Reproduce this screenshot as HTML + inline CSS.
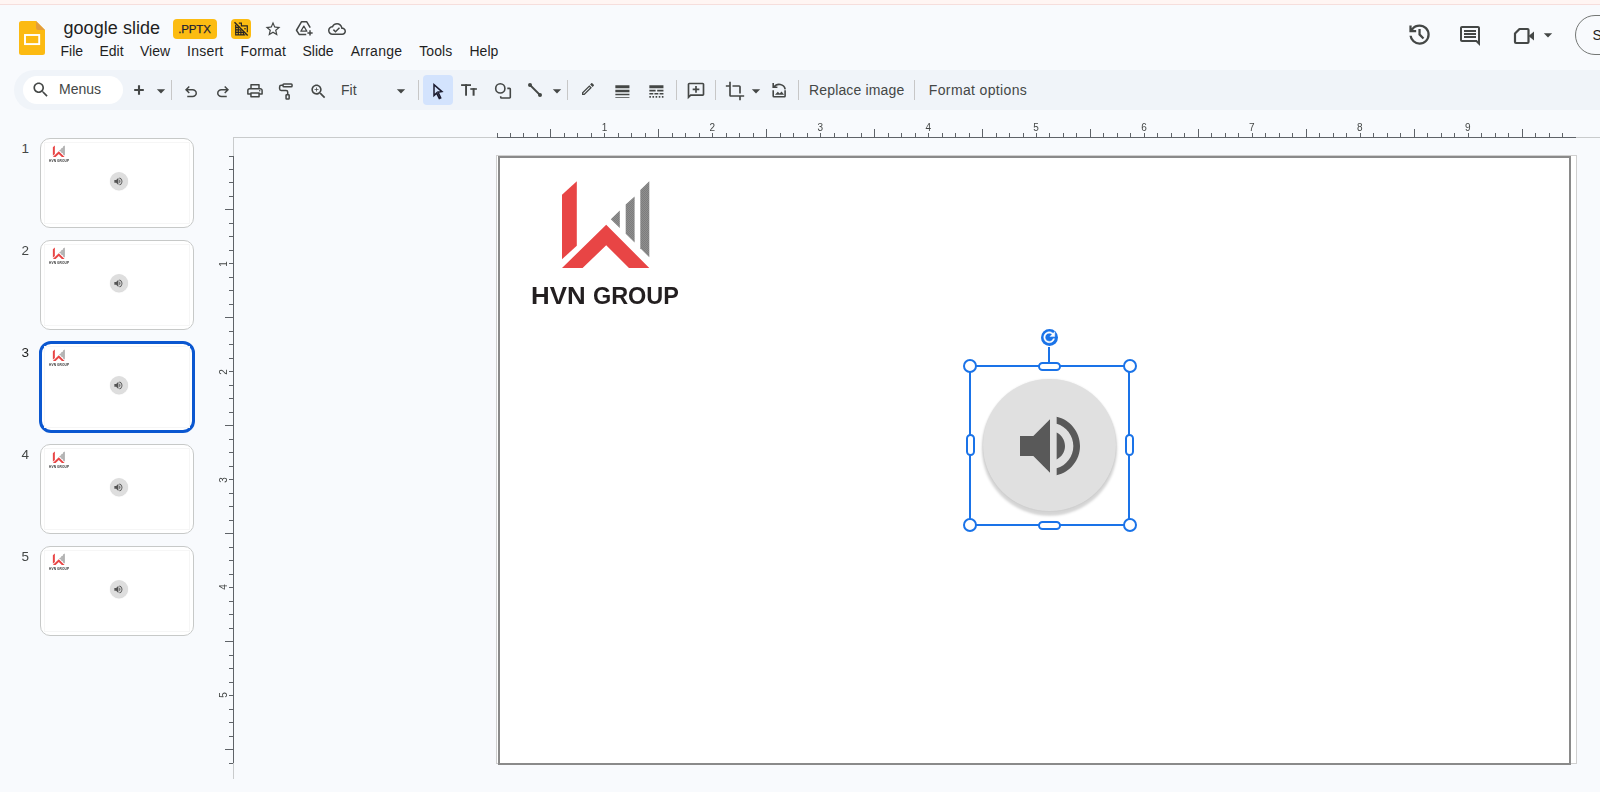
<!DOCTYPE html>
<html lang="en"><head><meta charset="utf-8"><title>google slide - Google Slides</title>
<style>
*{box-sizing:border-box;margin:0;padding:0}
html,body{width:1600px;height:792px;overflow:hidden;background:#f8fafd;font-family:"Liberation Sans",sans-serif;color:#1f1f1f}
.abs{position:absolute}
.pinkband{left:0;top:0;width:1600px;height:4px;background:#fff5f3}
.pinkline{left:0;top:4px;width:1600px;height:1px;background:#f6dedc}
.title{left:63.500px;top:17.300px;letter-spacing:.05px;font-size:18px;line-height:22px;white-space:nowrap;color:#1f1f1f}
.badge{background:#fcbc12;border-radius:4px}
.pptx{left:173px;top:19px;width:44px;height:20px;font-size:11.5px;font-weight:normal;-webkit-text-stroke:.25px #1f1f33;line-height:21.600px;text-align:center;color:#1f1f33;letter-spacing:-.12px;text-indent:-1px}
.menu{top:43px;font-size:14px;line-height:16px;white-space:nowrap;color:#1f1f1f}
.toolbar{left:14px;top:70px;width:1620px;height:40px;border-radius:20px;background:#f0f4f9}
.menus{left:23px;top:76px;width:100px;height:28px;border-radius:14px;background:#fff}
.tbtxt{top:82px;font-size:14px;line-height:16px;white-space:nowrap;color:#444746}
.sep{top:80px;width:1px;height:20px;background:#c7c7c7}
.selbtn{left:423px;top:75px;width:30px;height:30px;border-radius:4px;background:#d3e3fd}
svg{position:absolute;overflow:visible}
.rnum{font-size:10px;line-height:12px;color:#444746}
</style></head>
<body>
<div class="abs pinkband"></div><div class="abs pinkline"></div>
<svg style="left:19px;top:21px" width="26" height="34" viewBox="0 0 26 34"><path d="M2.500 0H17l9 9v22.500a2.500 2.500 0 0 1-2.500 2.500h-21A2.500 2.500 0 0 1 0 31.500v-29A2.500 2.500 0 0 1 2.500 0z" fill="#fcba12"/><path d="M17 0l9 9h-7a2 2 0 0 1-2-2z" fill="#e39d3b"/><rect x="6" y="14" width="14.200" height="9.100" fill="none" stroke="#fff" stroke-width="1.900"/></svg>
<div class="abs title">google slide</div>
<div class="abs badge pptx">.PPTX</div>
<div class="abs badge" style="left:231px;top:19px;width:20px;height:20px"></div>
<svg style="left:234px;top:22px" width="14" height="14" viewBox="0 0 14 14"><g stroke="#2a2522" stroke-width="1.200" fill="none"><path d="M4.800 1.100H7.400V3.900H13.300V10.200"/><path d="M1.700 2.800V12.900H11.300"/><path d="M1.700 5.400H4 M1.700 7.900H6.500 M1.700 10.400H9 M4.300 5V12.900 M6.900 7.500V12.900 M9.400 10V12.900"/><path d="M.5 .2L13.700 13.400" stroke-width="1.400"/></g><rect x="10.300" y="6" width="1.400" height="1.400" fill="#2a2522"/></svg>
<svg style="left:264.2px;top:19.9px" width="18" height="18" viewBox="0 0 24 24" fill="#444746" ><path d="M22 9.240l-7.190-.62L12 2 9.190 8.630 2 9.240l5.460 4.730L5.820 21 12 17.270 18.180 21l-1.630-7.030L22 9.240zM12 15.400l-3.760 2.270 1-4.280-3.320-2.880 4.380-.38L12 6.100l1.710 4.040 4.380.38-3.320 2.880 1 4.280L12 15.400z"/></svg>
<svg style="left:295px;top:18.5px" width="18" height="18" viewBox="0 0 24 24" fill="#444746" ><g fill="none" stroke="#444746" stroke-width="2" stroke-linejoin="round"><path d="M15 20.500H5.500L2 15 8.800 3.500h6.700l4.800 8"/><path d="M7.800 16.300L11.800 9.500 15.800 16.300z" stroke-width="1.700"/></g><path d="M19 15h2v2.500h2.500v2H21V22h-2v-2.500h-2.500v-2H19z"/></svg>
<svg style="left:328px;top:19.5px" width="18" height="18" viewBox="0 0 24 24" fill="#444746" ><path d="M19.350 10.040C18.670 6.590 15.640 4 12 4 9.110 4 6.600 5.640 5.350 8.040 2.340 8.360 0 10.910 0 14c0 3.310 2.690 6 6 6h13c2.760 0 5-2.240 5-5 0-2.640-2.050-4.780-4.650-4.960zM19 18H6c-2.210 0-4-1.790-4-4 0-2.050 1.530-3.760 3.560-3.970l1.070-.11.5-.95C8.080 7.140 9.940 6 12 6c2.620 0 4.880 1.860 5.390 4.430l.3 1.500 1.530.11c1.560.1 2.780 1.410 2.780 2.960 0 1.650-1.350 3-3 3zm-9-3.820l-2.090-2.090L6.500 13.500 10 17l6.010-6.010-1.410-1.410z"/></svg>
<div class="abs menu" style="left:60.5px;letter-spacing:0px">File</div>
<div class="abs menu" style="left:99.5px;letter-spacing:0px">Edit</div>
<div class="abs menu" style="left:140px;letter-spacing:0px">View</div>
<div class="abs menu" style="left:187px;letter-spacing:0.25px">Insert</div>
<div class="abs menu" style="left:240.5px;letter-spacing:0.2px">Format</div>
<div class="abs menu" style="left:302.5px;letter-spacing:0px">Slide</div>
<div class="abs menu" style="left:350.7px;letter-spacing:0.25px">Arrange</div>
<div class="abs menu" style="left:419.2px;letter-spacing:0.1px">Tools</div>
<div class="abs menu" style="left:469.5px;letter-spacing:0px">Help</div>
<svg style="left:1406.3px;top:21.3px" width="27.1" height="27.1" viewBox="0 -960 960 960" fill="#444746" ><path d="M480-120q-138 0-240.500-91.500T122-440h82q14 104 92.500 172T480-200q117 0 198.500-81.500T760-480q0-117-81.500-198.500T480-760q-69 0-129 32t-101 88h110v80H120v-240h80v94q51-64 124.500-99T480-840q75 0 140.500 28.500t114 77q48.500 48.500 77 114T840-480q0 75-28.500 140.500t-77 114q-48.500 48.500-114 77T480-120Zm112-192L440-464v-216h80v184l128 128-56 56Z"/></svg>
<svg style="left:1458px;top:23.5px" width="24" height="24" viewBox="0 0 24 24" fill="#444746" ><path d="M21.990 4c0-1.100-.89-2-1.990-2H4c-1.100 0-2 .9-2 2v12c0 1.100.9 2 2 2h14l4 4-.01-18zM20 4v13.170L18.830 16H4V4h16zM6 12h12v2H6zm0-3h12v2H6zm0-3h12v2H6z"/></svg>
<svg style="left:1512.2px;top:23.5px" width="24" height="24" viewBox="0 0 24 24" fill="#444746" ><g fill="none" stroke="#444746" stroke-width="2.200" stroke-linejoin="round"><path d="M3 9.500L7.500 5H15.500a1 1 0 0 1 1 1V18a1 1 0 0 1 -1 1H4a1 1 0 0 1 -1 -1z"/></g><path d="M16.500 12l5.500-4.500v9z"/></svg>
<svg style="left:1538.2px;top:24.7px" width="20" height="20" viewBox="0 0 24 24" fill="#444746" ><path d="M7 10l5 5 5-5z"/></svg>
<div class="abs" style="left:1575px;top:15px;width:80px;height:40px;border:1px solid #747775;border-radius:20px"></div>
<div class="abs" style="left:1592.500px;top:27px;font-size:14px;line-height:16px;color:#1f1f1f">S</div>
<div class="abs toolbar"></div>
<div class="abs menus"></div>
<svg style="left:30.8px;top:80px" width="19.5" height="19.5" viewBox="0 0 24 24" fill="#444746" ><path d="M15.5 14h-.79l-.28-.27C15.41 12.59 16 11.11 16 9.5 16 5.91 13.09 3 9.500 3S3 5.910 3 9.500 5.910 16 9.500 16c1.610 0 3.090-.59 4.230-1.570l.27.28v.79l5 4.990L20.490 19l-4.990-5zm-6 0C7.010 14 5 11.990 5 9.500S7.010 5 9.500 5 14 7.010 14 9.500 11.990 14 9.500 14z"/></svg>
<div class="abs tbtxt" style="left:59px;top:81.200px">Menus</div>
<svg style="left:130px;top:81.2px" width="18" height="18" viewBox="0 0 24 24" fill="#444746" ><path d="M10.600 5.600h2.800v5h5v2.800h-5v5h-2.800v-5h-5v-2.800h5z"/></svg>
<svg style="left:150.7px;top:80.7px" width="20" height="20" viewBox="0 0 24 24" fill="#444746" ><path d="M7 10l5 5 5-5z"/></svg>
<div class="abs sep" style="left:171px"></div>
<div class="abs sep" style="left:418px"></div>
<div class="abs sep" style="left:567px"></div>
<div class="abs sep" style="left:676px"></div>
<div class="abs sep" style="left:715px"></div>
<div class="abs sep" style="left:798px"></div>
<div class="abs sep" style="left:914px"></div>
<svg style="left:182px;top:82.5px" width="18" height="18" viewBox="0 -960 960 960" fill="#444746" ><path d="M280-200v-80h284q63 0 109.500-40T720-420q0-60-46.500-100T564-560H312l104 104-56 56-200-200 200-200 56 56-104 104h252q97 0 166.500 63T800-420q0 94-69.500 157T564-200H280Z"/></svg>
<svg style="left:214px;top:82.5px" width="18" height="18" viewBox="0 -960 960 960" fill="#444746" ><path d="M396-200q-97 0-166.500-63T160-420q0-94 69.500-157T396-640h252L544-744l56-56 200 200-200 200-56-56 104-104H396q-63 0-109.500 40T240-420q0 60 46.500 100T396-280h284v80H396Z"/></svg>
<svg style="left:309.3px;top:81.5px" width="19" height="19" viewBox="0 0 24 24" fill="#444746" ><path d="M15.5 14h-.79l-.28-.27C15.41 12.59 16 11.11 16 9.5 16 5.91 13.09 3 9.500 3S3 5.910 3 9.500 5.910 16 9.500 16c1.610 0 3.090-.59 4.230-1.570l.27.28v.79l5 4.990L20.490 19l-4.990-5zm-6 0C7.010 14 5 11.990 5 9.500S7.010 5 9.500 5 14 7.010 14 9.500 11.990 14 9.500 14zm.5-7H9v2H7v1h2v2h1v-2h2V9h-2z"/></svg>
<div class="abs tbtxt" style="left:341px">Fit</div>
<svg style="left:391px;top:80.7px" width="20" height="20" viewBox="0 0 24 24" fill="#444746" ><path d="M7 10l5 5 5-5z"/></svg>
<div class="abs selbtn"></div>
<svg style="left:547px;top:80.7px" width="20" height="20" viewBox="0 0 24 24" fill="#444746" ><path d="M7 10l5 5 5-5z"/></svg>
<svg style="left:580.1px;top:81.3px" width="16" height="16" viewBox="0 0 24 24" fill="#444746" ><path d="M14.060 9.020l.92.92L5.920 19H5v-.92l9.060-9.060M17.660 3c-.25 0-.51.1-.7.290l-1.830 1.830 3.750 3.750 1.830-1.830c.39-.39.39-1.020 0-1.410l-2.340-2.340c-.2-.2-.45-.29-.71-.29zm-3.600 3.190L3 17.250V21h3.750L17.810 9.940l-3.750-3.750z"/></svg>
<svg style="left:612.65px;top:82px" width="18.8" height="18.8" viewBox="0 0 24 24" fill="#444746" ><path d="M3 17h18v-2H3v2zm0 3h18v-1H3v1zm0-7h18v-3H3v3zm0-9v4h18V4H3z"/></svg>
<svg style="left:646.75px;top:82px" width="18.8" height="18.8" viewBox="0 0 24 24" fill="#444746" ><path d="M3 16h5v-2H3v2zm6.500 0h5v-2h-5v2zm6.500 0h5v-2h-5v2zM3 20h2v-2H3v2zm4 0h2v-2H7v2zm4 0h2v-2h-2v2zm4 0h2v-2h-2v2zm4 0h2v-2h-2v2zM3 12h8v-2H3v2zm10 0h8v-2h-8v2zM3 4v4h18V4H3z"/></svg>
<svg style="left:686px;top:80.9px" width="20" height="20" viewBox="0 0 24 24" fill="#444746" ><path d="M20 2H4c-1.100 0-2 .9-2 2v18l4-4h14c1.100 0 2-.9 2-2V4c0-1.100-.9-2-2-2zm0 14H5.170L4 17.170V4h16v12zm-9-2h2v-3h3V9h-3V6h-2v3H8v2h3z"/></svg>
<svg style="left:725px;top:81px" width="20" height="20" viewBox="0 0 24 24" fill="#444746" ><path d="M17 15h2V7c0-1.100-.9-2-2-2H9v2h8v8zM7 17V1H5v4H1v2h4v10c0 1.100.9 2 2 2h10v4h2v-4h4v-2H7z"/></svg>
<svg style="left:746px;top:80.7px" width="20" height="20" viewBox="0 0 24 24" fill="#444746" ><path d="M7 10l5 5 5-5z"/></svg>
<div class="abs tbtxt" style="left:809px;letter-spacing:.15px">Replace image</div>
<div class="abs tbtxt" style="left:928.800px;letter-spacing:.36px">Format options</div>
<svg style="left:0;top:0" width="1600" height="120" viewBox="0 0 1600 120"><g fill="none" stroke="#444746" stroke-width="1.500" stroke-linejoin="round"><path d="M251 88V84.850H259V88"/><path d="M251 94H247.850V90.500a1.800 1.800 0 0 1 1.800-1.800H260.300a1.800 1.800 0 0 1 1.800 1.800V94H259"/><rect x="250.950" y="92.950" width="8.100" height="3.900"/></g><circle cx="259.700" cy="90.700" r=".75" fill="#444746"/><g fill="none" stroke="#444746" stroke-width="1.500" stroke-linejoin="round"><rect x="283.050" y="83.950" width="9" height="2.800" rx=".8"/><path d="M283 85.300H281.200a1.600 1.600 0 0 0-1.600 1.600V88.800a1.600 1.600 0 0 0 1.600 1.600H286.100a1.600 1.600 0 0 1 1.600 1.600V94.500"/><rect x="286.050" y="94.750" width="3.100" height="4.300" rx=".6"/></g><path d="M434 84.700V95.600L436.600 93.100 439.300 98.500 440.700 97.800 438 92.200 441.900 91.600Z" fill="#d3e3fd" stroke="#1b1b2f" stroke-width="1.500" stroke-linejoin="miter"/><g fill="#444746"><rect x="461.100" y="84.200" width="9.900" height="1.800"/><rect x="465.100" y="84.200" width="1.900" height="11.500"/><rect x="470.300" y="88.200" width="6.600" height="1.600"/><rect x="472.600" y="88.200" width="2" height="7.500"/></g><g fill="none" stroke="#444746" stroke-width="1.600"><circle cx="500.300" cy="88.400" r="4.600"/><path d="M507.300 88.400H509.500a.8 .8 0 0 1 .8 .8V97.200a.8 .8 0 0 1-.8 .8H501.500a.8 .8 0 0 1-.8-.8V96.200"/></g><g fill="#444746" stroke="#444746"><line x1="530" y1="85" x2="540" y2="95" stroke-width="1.800"/><circle cx="530" cy="85" r="2" stroke="none"/><circle cx="540" cy="95" r="2" stroke="none"/></g><g fill="none" stroke="#444746" stroke-width="1.600"><path d="M773.200 90.300V96a.8 .8 0 0 0 .8 .8H784.300a.8 .8 0 0 0 .8-.8V90.300"/><path d="M774 87.200A6.200 6.200 0 0 1 785.200 89.300"/><path d="M773.200 83V87.300H777.400"/></g><path d="M775 94.700L777.800 91.800 779.600 93.600 781.600 91.500 784.100 94.700Z" fill="#444746"/></svg>
<div class="abs" style="left:13.200px;top:140.7px;width:24px;text-align:center;font-size:13.500px;line-height:16px;color:#444746">1</div>
<div class="abs" style="left:40px;top:138px;width:154px;height:90px;border:1px solid #c7c9c8;border-radius:10px;background:#fff"></div>
<div class="abs" style="left:44px;top:142px;width:146px;height:82px;border:1px solid #f6f6f6"></div>
<svg style="left:44.4px;top:142.2px;will-change:transform" width="144.80" height="81.46" viewBox="0 0 1079.0 607.0"><polygon points="66.0,38.7 80.8,25.3 80.8,89.8 66.0,103.2" fill="#e84545"/><polygon points="66.0,112.0 110.2,68.8 153.3,112.0 133.0,112.0 110.2,89.2 86.6,112.0" fill="#e84545"/><polygon points="114.8,63.3 123.8,54.6 123.8,71.9" fill="#868686"/><polygon points="129.7,48.6 138.6,40.4 138.6,86.4 129.7,77.8" fill="#868686"/><polygon points="144.3,34.0 153.3,25.3 153.3,101.3 144.3,92.3" fill="#868686"/></svg>
<div class="abs" style="left:48.9px;top:159.29999999999998px;font-size:3.200px;line-height:4px;font-weight:bold;color:#333;white-space:nowrap;letter-spacing:.1px;will-change:transform">HVN GROUP</div>
<div class="abs" style="left:109.67px;top:172.05px;width:18px;height:18px;border-radius:50%;background:#dedede;box-shadow:0 .5px 1px rgba(0,0,0,.18)"></div>
<svg style="left:113.27px;top:175.65px" width="10.800" height="10.800" viewBox="0 0 24 24"><path d="M3 9v6h4l5 5V4L7 9H3zm13.500 3c0-1.770-1.020-3.290-2.500-4.030v8.050c1.480-.73 2.500-2.250 2.500-4.020zM14 3.230v2.060c2.890.86 5 3.540 5 6.710s-2.110 5.850-5 6.710v2.060c4.010-.91 7-4.490 7-8.770s-2.990-7.860-7-8.770z" fill="#555"/></svg>
<div class="abs" style="left:13.200px;top:242.7px;width:24px;text-align:center;font-size:13.500px;line-height:16px;color:#444746">2</div>
<div class="abs" style="left:40px;top:240px;width:154px;height:90px;border:1px solid #c7c9c8;border-radius:10px;background:#fff"></div>
<div class="abs" style="left:44px;top:244px;width:146px;height:82px;border:1px solid #f6f6f6"></div>
<svg style="left:44.4px;top:244.2px;will-change:transform" width="144.80" height="81.46" viewBox="0 0 1079.0 607.0"><polygon points="66.0,38.7 80.8,25.3 80.8,89.8 66.0,103.2" fill="#e84545"/><polygon points="66.0,112.0 110.2,68.8 153.3,112.0 133.0,112.0 110.2,89.2 86.6,112.0" fill="#e84545"/><polygon points="114.8,63.3 123.8,54.6 123.8,71.9" fill="#868686"/><polygon points="129.7,48.6 138.6,40.4 138.6,86.4 129.7,77.8" fill="#868686"/><polygon points="144.3,34.0 153.3,25.3 153.3,101.3 144.3,92.3" fill="#868686"/></svg>
<div class="abs" style="left:48.9px;top:261.3px;font-size:3.200px;line-height:4px;font-weight:bold;color:#333;white-space:nowrap;letter-spacing:.1px;will-change:transform">HVN GROUP</div>
<div class="abs" style="left:109.67px;top:274.05px;width:18px;height:18px;border-radius:50%;background:#dedede;box-shadow:0 .5px 1px rgba(0,0,0,.18)"></div>
<svg style="left:113.27px;top:277.65px" width="10.800" height="10.800" viewBox="0 0 24 24"><path d="M3 9v6h4l5 5V4L7 9H3zm13.500 3c0-1.770-1.020-3.290-2.500-4.030v8.050c1.480-.73 2.500-2.250 2.500-4.020zM14 3.230v2.060c2.890.86 5 3.540 5 6.710s-2.110 5.850-5 6.710v2.060c4.010-.91 7-4.490 7-8.770s-2.990-7.860-7-8.770z" fill="#555"/></svg>
<div class="abs" style="left:13.200px;top:344.7px;width:24px;text-align:center;font-size:13.500px;line-height:16px;color:#1f1f1f">3</div>
<div class="abs" style="left:39px;top:341px;width:156px;height:92px;border:3px solid #0b57d0;border-radius:12px;background:#fff"></div>
<div class="abs" style="left:44px;top:346px;width:146px;height:82px;border:1px solid #f6f6f6"></div>
<svg style="left:44.4px;top:346.2px;will-change:transform" width="144.80" height="81.46" viewBox="0 0 1079.0 607.0"><polygon points="66.0,38.7 80.8,25.3 80.8,89.8 66.0,103.2" fill="#e84545"/><polygon points="66.0,112.0 110.2,68.8 153.3,112.0 133.0,112.0 110.2,89.2 86.6,112.0" fill="#e84545"/><polygon points="114.8,63.3 123.8,54.6 123.8,71.9" fill="#868686"/><polygon points="129.7,48.6 138.6,40.4 138.6,86.4 129.7,77.8" fill="#868686"/><polygon points="144.3,34.0 153.3,25.3 153.3,101.3 144.3,92.3" fill="#868686"/></svg>
<div class="abs" style="left:48.9px;top:363.3px;font-size:3.200px;line-height:4px;font-weight:bold;color:#333;white-space:nowrap;letter-spacing:.1px;will-change:transform">HVN GROUP</div>
<div class="abs" style="left:109.67px;top:376.05px;width:18px;height:18px;border-radius:50%;background:#dedede;box-shadow:0 .5px 1px rgba(0,0,0,.18)"></div>
<svg style="left:113.27px;top:379.65px" width="10.800" height="10.800" viewBox="0 0 24 24"><path d="M3 9v6h4l5 5V4L7 9H3zm13.500 3c0-1.770-1.020-3.290-2.500-4.030v8.050c1.480-.73 2.500-2.250 2.500-4.020zM14 3.230v2.060c2.890.86 5 3.540 5 6.710s-2.110 5.850-5 6.710v2.060c4.010-.91 7-4.490 7-8.770s-2.990-7.860-7-8.770z" fill="#555"/></svg>
<div class="abs" style="left:13.200px;top:446.7px;width:24px;text-align:center;font-size:13.500px;line-height:16px;color:#444746">4</div>
<div class="abs" style="left:40px;top:444px;width:154px;height:90px;border:1px solid #c7c9c8;border-radius:10px;background:#fff"></div>
<div class="abs" style="left:44px;top:448px;width:146px;height:82px;border:1px solid #f6f6f6"></div>
<svg style="left:44.4px;top:448.2px;will-change:transform" width="144.80" height="81.46" viewBox="0 0 1079.0 607.0"><polygon points="66.0,38.7 80.8,25.3 80.8,89.8 66.0,103.2" fill="#e84545"/><polygon points="66.0,112.0 110.2,68.8 153.3,112.0 133.0,112.0 110.2,89.2 86.6,112.0" fill="#e84545"/><polygon points="114.8,63.3 123.8,54.6 123.8,71.9" fill="#868686"/><polygon points="129.7,48.6 138.6,40.4 138.6,86.4 129.7,77.8" fill="#868686"/><polygon points="144.3,34.0 153.3,25.3 153.3,101.3 144.3,92.3" fill="#868686"/></svg>
<div class="abs" style="left:48.9px;top:465.3px;font-size:3.200px;line-height:4px;font-weight:bold;color:#333;white-space:nowrap;letter-spacing:.1px;will-change:transform">HVN GROUP</div>
<div class="abs" style="left:109.67px;top:478.05px;width:18px;height:18px;border-radius:50%;background:#dedede;box-shadow:0 .5px 1px rgba(0,0,0,.18)"></div>
<svg style="left:113.27px;top:481.65px" width="10.800" height="10.800" viewBox="0 0 24 24"><path d="M3 9v6h4l5 5V4L7 9H3zm13.500 3c0-1.770-1.020-3.290-2.500-4.030v8.050c1.480-.73 2.500-2.250 2.500-4.020zM14 3.230v2.060c2.890.86 5 3.540 5 6.710s-2.110 5.850-5 6.710v2.060c4.010-.91 7-4.490 7-8.770s-2.990-7.860-7-8.770z" fill="#555"/></svg>
<div class="abs" style="left:13.200px;top:548.7px;width:24px;text-align:center;font-size:13.500px;line-height:16px;color:#444746">5</div>
<div class="abs" style="left:40px;top:546px;width:154px;height:90px;border:1px solid #c7c9c8;border-radius:10px;background:#fff"></div>
<div class="abs" style="left:44px;top:550px;width:146px;height:82px;border:1px solid #f6f6f6"></div>
<svg style="left:44.4px;top:550.2px;will-change:transform" width="144.80" height="81.46" viewBox="0 0 1079.0 607.0"><polygon points="66.0,38.7 80.8,25.3 80.8,89.8 66.0,103.2" fill="#e84545"/><polygon points="66.0,112.0 110.2,68.8 153.3,112.0 133.0,112.0 110.2,89.2 86.6,112.0" fill="#e84545"/><polygon points="114.8,63.3 123.8,54.6 123.8,71.9" fill="#868686"/><polygon points="129.7,48.6 138.6,40.4 138.6,86.4 129.7,77.8" fill="#868686"/><polygon points="144.3,34.0 153.3,25.3 153.3,101.3 144.3,92.3" fill="#868686"/></svg>
<div class="abs" style="left:48.9px;top:567.3000000000001px;font-size:3.200px;line-height:4px;font-weight:bold;color:#333;white-space:nowrap;letter-spacing:.1px;will-change:transform">HVN GROUP</div>
<div class="abs" style="left:109.67px;top:580.05px;width:18px;height:18px;border-radius:50%;background:#dedede;box-shadow:0 .5px 1px rgba(0,0,0,.18)"></div>
<svg style="left:113.27px;top:583.65px" width="10.800" height="10.800" viewBox="0 0 24 24"><path d="M3 9v6h4l5 5V4L7 9H3zm13.500 3c0-1.770-1.020-3.290-2.500-4.030v8.050c1.480-.73 2.500-2.250 2.500-4.020zM14 3.230v2.060c2.890.86 5 3.540 5 6.710s-2.110 5.850-5 6.710v2.060c4.010-.91 7-4.490 7-8.770s-2.990-7.860-7-8.770z" fill="#555"/></svg>
<div class="abs" style="left:233px;top:137px;width:1367px;height:1px;background:#c9cbcc"></div>
<div class="abs" style="left:233px;top:137px;width:1px;height:642px;background:#c9cbcc"></div>
<svg style="left:0;top:0" width="1600" height="792" viewBox="0 0 1600 792" shape-rendering="crispEdges"><rect x="497" y="137" width="1079" height="1" fill="#5f6368"/><rect x="233" y="156" width="1" height="607" fill="#5f6368"/><rect x="497" y="133" width="1" height="4" fill="#5f6368"/><rect x="510" y="133" width="1" height="4" fill="#5f6368"/><rect x="523" y="133" width="1" height="4" fill="#5f6368"/><rect x="537" y="133" width="1" height="4" fill="#5f6368"/><rect x="550" y="129" width="1" height="8" fill="#5f6368"/><rect x="564" y="133" width="1" height="4" fill="#5f6368"/><rect x="577" y="133" width="1" height="4" fill="#5f6368"/><rect x="591" y="133" width="1" height="4" fill="#5f6368"/><rect x="604" y="133" width="1" height="4" fill="#5f6368"/><rect x="618" y="133" width="1" height="4" fill="#5f6368"/><rect x="631" y="133" width="1" height="4" fill="#5f6368"/><rect x="645" y="133" width="1" height="4" fill="#5f6368"/><rect x="658" y="129" width="1" height="8" fill="#5f6368"/><rect x="672" y="133" width="1" height="4" fill="#5f6368"/><rect x="685" y="133" width="1" height="4" fill="#5f6368"/><rect x="699" y="133" width="1" height="4" fill="#5f6368"/><rect x="712" y="133" width="1" height="4" fill="#5f6368"/><rect x="726" y="133" width="1" height="4" fill="#5f6368"/><rect x="739" y="133" width="1" height="4" fill="#5f6368"/><rect x="753" y="133" width="1" height="4" fill="#5f6368"/><rect x="766" y="129" width="1" height="8" fill="#5f6368"/><rect x="780" y="133" width="1" height="4" fill="#5f6368"/><rect x="793" y="133" width="1" height="4" fill="#5f6368"/><rect x="807" y="133" width="1" height="4" fill="#5f6368"/><rect x="820" y="133" width="1" height="4" fill="#5f6368"/><rect x="834" y="133" width="1" height="4" fill="#5f6368"/><rect x="847" y="133" width="1" height="4" fill="#5f6368"/><rect x="861" y="133" width="1" height="4" fill="#5f6368"/><rect x="874" y="129" width="1" height="8" fill="#5f6368"/><rect x="888" y="133" width="1" height="4" fill="#5f6368"/><rect x="901" y="133" width="1" height="4" fill="#5f6368"/><rect x="915" y="133" width="1" height="4" fill="#5f6368"/><rect x="928" y="133" width="1" height="4" fill="#5f6368"/><rect x="942" y="133" width="1" height="4" fill="#5f6368"/><rect x="955" y="133" width="1" height="4" fill="#5f6368"/><rect x="969" y="133" width="1" height="4" fill="#5f6368"/><rect x="982" y="129" width="1" height="8" fill="#5f6368"/><rect x="996" y="133" width="1" height="4" fill="#5f6368"/><rect x="1009" y="133" width="1" height="4" fill="#5f6368"/><rect x="1023" y="133" width="1" height="4" fill="#5f6368"/><rect x="1036" y="133" width="1" height="4" fill="#5f6368"/><rect x="1049" y="133" width="1" height="4" fill="#5f6368"/><rect x="1063" y="133" width="1" height="4" fill="#5f6368"/><rect x="1076" y="133" width="1" height="4" fill="#5f6368"/><rect x="1090" y="129" width="1" height="8" fill="#5f6368"/><rect x="1103" y="133" width="1" height="4" fill="#5f6368"/><rect x="1117" y="133" width="1" height="4" fill="#5f6368"/><rect x="1130" y="133" width="1" height="4" fill="#5f6368"/><rect x="1144" y="133" width="1" height="4" fill="#5f6368"/><rect x="1157" y="133" width="1" height="4" fill="#5f6368"/><rect x="1171" y="133" width="1" height="4" fill="#5f6368"/><rect x="1184" y="133" width="1" height="4" fill="#5f6368"/><rect x="1198" y="129" width="1" height="8" fill="#5f6368"/><rect x="1211" y="133" width="1" height="4" fill="#5f6368"/><rect x="1225" y="133" width="1" height="4" fill="#5f6368"/><rect x="1238" y="133" width="1" height="4" fill="#5f6368"/><rect x="1252" y="133" width="1" height="4" fill="#5f6368"/><rect x="1265" y="133" width="1" height="4" fill="#5f6368"/><rect x="1279" y="133" width="1" height="4" fill="#5f6368"/><rect x="1292" y="133" width="1" height="4" fill="#5f6368"/><rect x="1306" y="129" width="1" height="8" fill="#5f6368"/><rect x="1319" y="133" width="1" height="4" fill="#5f6368"/><rect x="1333" y="133" width="1" height="4" fill="#5f6368"/><rect x="1346" y="133" width="1" height="4" fill="#5f6368"/><rect x="1360" y="133" width="1" height="4" fill="#5f6368"/><rect x="1373" y="133" width="1" height="4" fill="#5f6368"/><rect x="1387" y="133" width="1" height="4" fill="#5f6368"/><rect x="1400" y="133" width="1" height="4" fill="#5f6368"/><rect x="1414" y="129" width="1" height="8" fill="#5f6368"/><rect x="1427" y="133" width="1" height="4" fill="#5f6368"/><rect x="1441" y="133" width="1" height="4" fill="#5f6368"/><rect x="1454" y="133" width="1" height="4" fill="#5f6368"/><rect x="1468" y="133" width="1" height="4" fill="#5f6368"/><rect x="1481" y="133" width="1" height="4" fill="#5f6368"/><rect x="1495" y="133" width="1" height="4" fill="#5f6368"/><rect x="1508" y="133" width="1" height="4" fill="#5f6368"/><rect x="1522" y="129" width="1" height="8" fill="#5f6368"/><rect x="1535" y="133" width="1" height="4" fill="#5f6368"/><rect x="1549" y="133" width="1" height="4" fill="#5f6368"/><rect x="1562" y="133" width="1" height="4" fill="#5f6368"/><rect x="229" y="156" width="4" height="1" fill="#5f6368"/><rect x="229" y="169" width="4" height="1" fill="#5f6368"/><rect x="229" y="182" width="4" height="1" fill="#5f6368"/><rect x="229" y="196" width="4" height="1" fill="#5f6368"/><rect x="225" y="209" width="8" height="1" fill="#5f6368"/><rect x="229" y="223" width="4" height="1" fill="#5f6368"/><rect x="229" y="236" width="4" height="1" fill="#5f6368"/><rect x="229" y="250" width="4" height="1" fill="#5f6368"/><rect x="229" y="263" width="4" height="1" fill="#5f6368"/><rect x="229" y="277" width="4" height="1" fill="#5f6368"/><rect x="229" y="290" width="4" height="1" fill="#5f6368"/><rect x="229" y="304" width="4" height="1" fill="#5f6368"/><rect x="225" y="317" width="8" height="1" fill="#5f6368"/><rect x="229" y="331" width="4" height="1" fill="#5f6368"/><rect x="229" y="344" width="4" height="1" fill="#5f6368"/><rect x="229" y="358" width="4" height="1" fill="#5f6368"/><rect x="229" y="371" width="4" height="1" fill="#5f6368"/><rect x="229" y="385" width="4" height="1" fill="#5f6368"/><rect x="229" y="398" width="4" height="1" fill="#5f6368"/><rect x="229" y="412" width="4" height="1" fill="#5f6368"/><rect x="225" y="425" width="8" height="1" fill="#5f6368"/><rect x="229" y="439" width="4" height="1" fill="#5f6368"/><rect x="229" y="452" width="4" height="1" fill="#5f6368"/><rect x="229" y="466" width="4" height="1" fill="#5f6368"/><rect x="229" y="479" width="4" height="1" fill="#5f6368"/><rect x="229" y="493" width="4" height="1" fill="#5f6368"/><rect x="229" y="506" width="4" height="1" fill="#5f6368"/><rect x="229" y="520" width="4" height="1" fill="#5f6368"/><rect x="225" y="533" width="8" height="1" fill="#5f6368"/><rect x="229" y="547" width="4" height="1" fill="#5f6368"/><rect x="229" y="560" width="4" height="1" fill="#5f6368"/><rect x="229" y="574" width="4" height="1" fill="#5f6368"/><rect x="229" y="587" width="4" height="1" fill="#5f6368"/><rect x="229" y="601" width="4" height="1" fill="#5f6368"/><rect x="229" y="614" width="4" height="1" fill="#5f6368"/><rect x="229" y="628" width="4" height="1" fill="#5f6368"/><rect x="225" y="641" width="8" height="1" fill="#5f6368"/><rect x="229" y="655" width="4" height="1" fill="#5f6368"/><rect x="229" y="668" width="4" height="1" fill="#5f6368"/><rect x="229" y="682" width="4" height="1" fill="#5f6368"/><rect x="229" y="695" width="4" height="1" fill="#5f6368"/><rect x="229" y="709" width="4" height="1" fill="#5f6368"/><rect x="229" y="722" width="4" height="1" fill="#5f6368"/><rect x="229" y="736" width="4" height="1" fill="#5f6368"/><rect x="225" y="749" width="8" height="1" fill="#5f6368"/><rect x="229" y="763" width="4" height="1" fill="#5f6368"/></svg>
<div class="abs rnum" style="left:594.5px;top:121.800px;width:20px;text-align:center">1</div>
<div class="abs rnum" style="left:702.4px;top:121.800px;width:20px;text-align:center">2</div>
<div class="abs rnum" style="left:810.3px;top:121.800px;width:20px;text-align:center">3</div>
<div class="abs rnum" style="left:918.2px;top:121.800px;width:20px;text-align:center">4</div>
<div class="abs rnum" style="left:1026.1px;top:121.800px;width:20px;text-align:center">5</div>
<div class="abs rnum" style="left:1134.0px;top:121.800px;width:20px;text-align:center">6</div>
<div class="abs rnum" style="left:1241.9px;top:121.800px;width:20px;text-align:center">7</div>
<div class="abs rnum" style="left:1349.8px;top:121.800px;width:20px;text-align:center">8</div>
<div class="abs rnum" style="left:1457.7px;top:121.800px;width:20px;text-align:center">9</div>
<div class="abs rnum" style="left:214.2px;top:257.7px;width:20px;height:12px;text-align:center;transform:rotate(-90deg)">1</div>
<div class="abs rnum" style="left:214.2px;top:365.6px;width:20px;height:12px;text-align:center;transform:rotate(-90deg)">2</div>
<div class="abs rnum" style="left:214.2px;top:473.5px;width:20px;height:12px;text-align:center;transform:rotate(-90deg)">3</div>
<div class="abs rnum" style="left:214.2px;top:581.4px;width:20px;height:12px;text-align:center;transform:rotate(-90deg)">4</div>
<div class="abs rnum" style="left:214.2px;top:689.3px;width:20px;height:12px;text-align:center;transform:rotate(-90deg)">5</div>
<div class="abs" style="left:496px;top:155px;width:1081px;height:609px;background:#fff;border:1px solid #d0d0d0"></div>
<div class="abs" style="left:498px;top:156px;width:1073px;height:609px;border:2px solid #8a8a8a;background:#fff"></div>
<svg style="left:496px;top:156px;will-change:transform" width="1079.00" height="607.00" viewBox="0 0 1079.0 607.0"><polygon points="66.0,38.7 80.8,25.3 80.8,89.8 66.0,103.2" fill="#e84545"/><polygon points="66.0,112.0 110.2,68.8 153.3,112.0 133.0,112.0 110.2,89.2 86.6,112.0" fill="#e84545"/><defs><pattern id="hatch" width="2" height="2" patternUnits="userSpaceOnUse" ><rect width="2" height="2" fill="#8f8f8f"/><rect width="1" height="1" fill="#7d7d7d"/><rect x="1" y="1" width="1" height="1" fill="#7d7d7d"/></pattern></defs><polygon points="114.8,63.3 123.8,54.6 123.8,71.9" fill="url(#hatch)"/><polygon points="129.7,48.6 138.6,40.4 138.6,86.4 129.7,77.8" fill="url(#hatch)"/><polygon points="144.3,34.0 153.3,25.3 153.3,101.3 144.3,92.3" fill="url(#hatch)"/><text x="35.1" y="147.9" font-family="Liberation Sans, sans-serif" font-weight="bold" font-size="23.400" fill="#231f20" lengthAdjust="spacingAndGlyphs" textLength="54.600">HVN</text><text x="96.9" y="147.9" font-family="Liberation Sans, sans-serif" font-weight="bold" font-size="23.400" fill="#231f20" lengthAdjust="spacingAndGlyphs" textLength="86">GROUP</text></svg>
<div class="abs" style="left:983.300px;top:379.100px;width:132.400px;height:132.400px;border-radius:50%;background:#e0e0e0;box-shadow:0 3.500px 2.500px 1.200px rgba(0,0,0,.17),0 0 2px rgba(0,0,0,.1)"></div>
<svg style="left:1009.600px;top:405.700px" width="80" height="80" viewBox="0 0 24 24"><path d="M3 9v6h4l5 5V4L7 9H3zm13.500 3c0-1.770-1.020-3.290-2.500-4.030v8.050c1.480-.73 2.500-2.250 2.500-4.020zM14 3.230v2.060c2.890.86 5 3.540 5 6.710s-2.110 5.850-5 6.710v2.060c4.010-.91 7-4.490 7-8.770s-2.990-7.860-7-8.770z" fill="#595959"/></svg>
<div class="abs" style="left:969.3px;top:365.1px;width:161.2px;height:161.1px;border:2px solid #1a73e8"></div>
<div class="abs" style="left:1048.400px;top:347px;width:2px;height:15.500px;background:#1a73e8"></div>
<div class="abs" style="left:963.3px;top:359.1px;width:14px;height:14px;border-radius:50%;border:2.200px solid #1a73e8;background:#fff"></div>
<div class="abs" style="left:1122.5px;top:359.1px;width:14px;height:14px;border-radius:50%;border:2.200px solid #1a73e8;background:#fff"></div>
<div class="abs" style="left:963.3px;top:518.2px;width:14px;height:14px;border-radius:50%;border:2.200px solid #1a73e8;background:#fff"></div>
<div class="abs" style="left:1122.5px;top:518.2px;width:14px;height:14px;border-radius:50%;border:2.200px solid #1a73e8;background:#fff"></div>
<div class="abs" style="left:1038.1px;top:361.8px;width:23px;height:9px;border-radius:4.500px;border:2px solid #1a73e8;background:#fff"></div>
<div class="abs" style="left:1038.1px;top:520.9px;width:23px;height:9px;border-radius:4.500px;border:2px solid #1a73e8;background:#fff"></div>
<div class="abs" style="left:965.8px;top:434.1px;width:9px;height:22.400px;border-radius:4.500px;border:2px solid #1a73e8;background:#fff"></div>
<div class="abs" style="left:1125.0px;top:434.1px;width:9px;height:22.400px;border-radius:4.500px;border:2px solid #1a73e8;background:#fff"></div>
<div class="abs" style="left:1041px;top:328.800px;width:17px;height:17px;border-radius:50%;background:#1a73e8"></div>
<svg style="left:1041.250px;top:329.050px" width="16.500" height="16.500" viewBox="0 0 24 24"><path d="M17.650 6.350C16.200 4.900 14.210 4 12 4c-4.420 0-7.990 3.580-7.990 8s3.570 8 7.990 8c3.730 0 6.840-2.550 7.730-6h-2.080c-.82 2.330-3.040 4-5.650 4-3.310 0-6-2.690-6-6s2.690-6 6-6c1.660 0 3.140.69 4.220 1.780L13 11h7V4l-2.350 2.350z" fill="#fff" stroke="#fff" stroke-width=".6"/></svg>
</body></html>
